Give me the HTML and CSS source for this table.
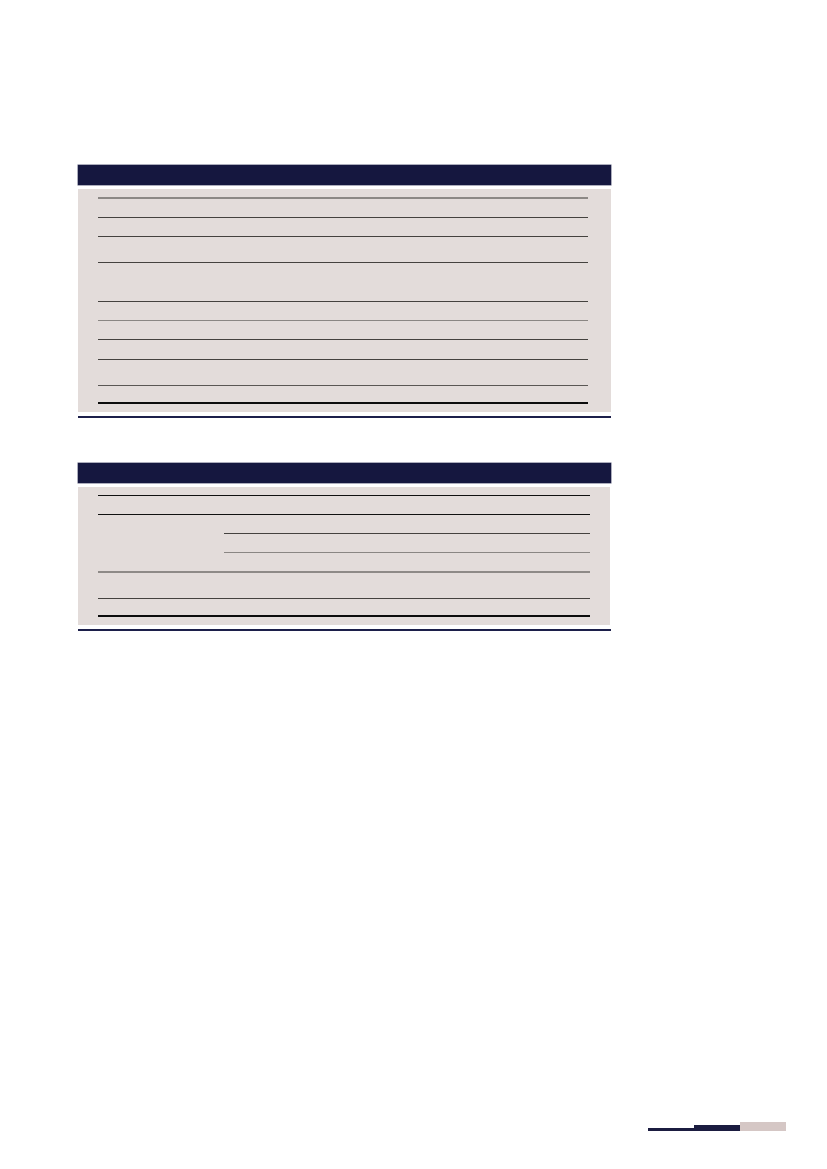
FILE: index.html
```html
<!DOCTYPE html>
<html lang="en">
<head>
<meta charset="utf-8">
<title>Tables</title>
<link rel="stylesheet" href="styles.css">
</head>
<body>
<main class="page">
  <section class="block block-one">
    <div class="block-head"></div>
    <div class="panel panel-one">
      <table class="grid grid-one">
        <colgroup><col class="c1a"><col class="c1b"></colgroup>
        <tr class="r h20 top-gray"><td></td><td></td></tr>
        <tr class="r h19 line-dark"><td></td><td></td></tr>
        <tr class="r h26 line-dark"><td></td><td></td></tr>
        <tr class="r h39 line-dark"><td></td><td></td></tr>
        <tr class="r h19 line-dark"><td></td><td></td></tr>
        <tr class="r h19 line-gray"><td></td><td></td></tr>
        <tr class="r h20 line-dark"><td></td><td></td></tr>
        <tr class="r h26 line-dark"><td></td><td></td></tr>
        <tr class="r h19 line-mid last-black"><td></td><td></td></tr>
      </table>
    </div>
    <div class="block-rule"></div>
  </section>

  <section class="block block-two">
    <div class="block-head"></div>
    <div class="panel panel-two">
      <table class="grid grid-two">
        <colgroup><col class="c2a"><col class="c2b"><col class="c2c"></colgroup>
        <tr class="r h19 line-black"><td></td><td></td><td></td></tr>
        <tr class="r h19 line-black"><td rowspan="3"></td><td></td><td></td></tr>
        <tr class="r h19 line-dark"><td></td><td></td></tr>
        <tr class="r h19 line-gray"><td></td><td></td></tr>
        <tr class="r h27 line-gray2"><td></td><td></td><td></td></tr>
        <tr class="r h19 line-dark last-black"><td></td><td></td><td></td></tr>
      </table>
    </div>
    <div class="block-rule"></div>
  </section>

  <footer class="page-foot">
    <span class="seg seg-a"></span>
    <span class="seg seg-b"></span>
    <span class="seg seg-c"></span>
  </footer>
</main>
</body>
</html>
```

FILE: styles.css
```css
html, body {
  margin: 0;
  padding: 0;
  background: #ffffff;
  font-family: "Liberation Sans", Arial, sans-serif;
}

.page {
  width: 827px;
  height: 1169px;
  padding: 165px 0 0 78px;
  box-sizing: border-box;
  display: flex;
  flex-direction: column;
}

.block {
  width: 533px;
  display: flex;
  flex-direction: column;
}

.block-two {
  margin-top: 45px;
}

.block-head {
  height: 20px;
  background: #15173f;
  box-shadow: 0 0 0 0.5px #5a5c7a;
}

.panel {
  margin-top: 4px;
  background: #e3dcda;
  padding: 8px 23px 8px 20px;
}

.panel-two {
  padding-right: 20px;
  margin-right: 1px;
}

.block-rule {
  margin-top: 4px;
  height: 2px;
  background: #1c1f4a;
}

.grid {
  width: 100%;
  border-collapse: separate;
  border-spacing: 0;
  table-layout: fixed;
}

.grid td {
  padding: 0;
  box-sizing: border-box;
}

.c1a { width: 191px; }
.c1b { width: auto; }

.c2a { width: 126px; }
.c2b { width: 147px; }
.c2c { width: auto; }

.h19 td { height: 19px; }
.h20 td { height: 20px; }
.h26 td { height: 26px; }
.h27 td { height: 27px; }
.h39 td { height: 39px; }

.top-gray td { border-top: 2px solid #8c8885; }
.line-dark td { border-top: 1px solid #45423f; }
.line-gray td { border-top: 1px solid #8a8683; }
.line-gray2 td { border-top: 2px solid #8e8a87; }
.line-mid td { border-top: 1px solid #5a5754; }
.line-black td { border-top: 1px solid #111111; }
.last-black td { border-bottom: 2px solid #0c0c0c; }

.page-foot {
  margin-top: auto;
  margin-bottom: 38px;
  margin-right: 41px;
  align-self: flex-end;
  display: flex;
  align-items: flex-end;
  height: 9px;
}

.seg {
  display: block;
  width: 46px;
}

.seg-a {
  height: 3px;
  background: #1b1c40;
}

.seg-b {
  height: 6px;
  background: #1b1c40;
}

.seg-c {
  height: 9px;
  background: #d5c7c5;
}
```
